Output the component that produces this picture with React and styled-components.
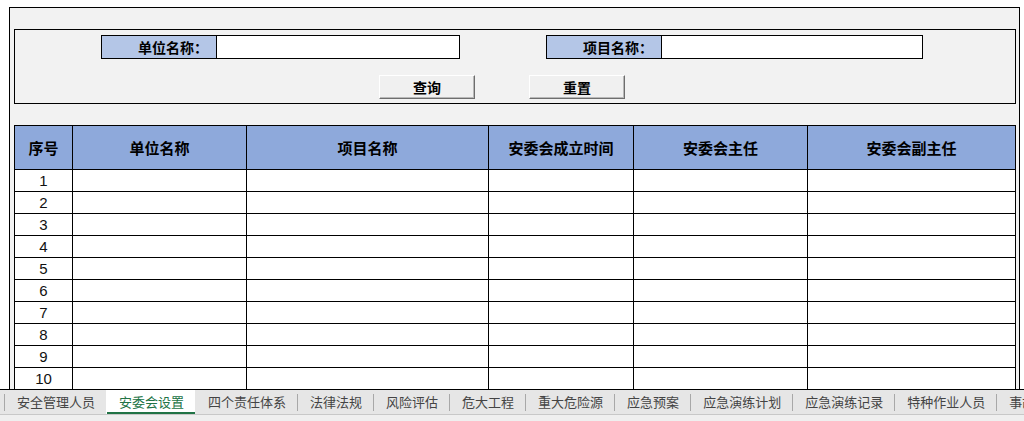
import React from "react";
import styled, { createGlobalStyle } from "styled-components";

const GlobalStyle = createGlobalStyle`
  html, body {
    margin: 0;
    padding: 0;
    background: #fff;
  }
  body {
    font-family: "Noto Sans CJK SC", "Liberation Sans", sans-serif;
  }
`;

const Page = styled.div`
  width: 1024px;
  height: 421px;
  display: flex;
  flex-direction: column;
  overflow: hidden;
`;

const Sheet = styled.div`
  flex: 1;
  overflow: hidden;
  padding: 7px 0 0 9px;
`;

const Frame = styled.div`
  width: 1011px;
  height: 382px;
  box-sizing: border-box;
  background: #f2f2f2;
  border: 1px solid #000;
  border-bottom: none;
  padding: 21px 0 0 4px;
  overflow: hidden;
`;

// search panel

const SearchPanel = styled.div`
  width: 1002px;
  height: 75px;
  box-sizing: border-box;
  border: 1px solid #000;
  padding-top: 5px;
`;

const FieldRow = styled.div`
  display: flex;
  height: 24px;
`;

const Field = styled.div`
  display: flex;
  margin-left: ${(p) => p.offset}px;
  height: 24px;
  border: 1px solid #000;
  box-sizing: border-box;
`;

const Label = styled.div`
  width: 115px;
  background: #b4c6e7;
  border-right: 1px solid #000;
  font-weight: 700;
  font-size: 14px;
  line-height: 22px;
  text-align: right;
  padding-right: 8px;
  box-sizing: border-box;
  color: #000;
`;

const Input = styled.input`
  width: ${(p) => p.w}px;
  border: none;
  background: #fff;
  padding: 0 4px;
  outline: none;
  box-sizing: border-box;
`;

const ButtonRow = styled.div`
  display: flex;
  margin-top: 16px;
`;

const Button = styled.button`
  margin-left: ${(p) => p.offset}px;
  width: 96px;
  height: 24px;
  background: #f0f0f0;
  border: 1px solid;
  border-color: #fff #6e6e6e #6e6e6e #fff;
  box-shadow: inset -1px -1px 0 #b8b8b8;
  font-family: "Noto Sans CJK SC", sans-serif;
  font-weight: 700;
  font-size: 14px;
  color: #000;
  padding: 0;
  line-height: 20px;
`;

// table

const Table = styled.table`
  margin-top: 21px;
  border-collapse: collapse;
  table-layout: fixed;
  width: 1001px;
  background: #fff;
`;

const Th = styled.th`
  height: 43px;
  padding: 0;
  background: #8ea9db;
  border: 1px solid #000;
  font-size: 15px;
  font-weight: 700;
  color: #000;
  text-align: center;
`;

const Td = styled.td`
  height: 21px;
  padding: 0;
  border: 1px solid #000;
  font-family: "Liberation Sans", Arial, sans-serif;
  font-size: 15px;
  color: #111;
  text-align: center;
  line-height: 21px;
`;

// sheet tabs

const TabBar = styled.div`
  height: 32px;
  flex-shrink: 0;
  background: #e6e6e6;
  border-top: 1px solid #000;
  box-sizing: border-box;
  overflow: hidden;
`;

const TabRow = styled.div`
  display: flex;
  height: 24px;
  padding-left: 4px;
  white-space: nowrap;
  border-bottom: 1px solid #c8c8c8;
`;

const Tab = styled.div`
  flex-shrink: 0;
  height: 24px;
  padding: 0 11px 0 12px;
  font-size: 13px;
  line-height: 24px;
  color: ${(p) => (p.active ? "#217346" : "#444")};
  background: ${(p) => (p.active ? "#fff" : "transparent")};
  box-shadow: ${(p) => (p.active ? "inset 0 -2px 0 #217346" : "none")};
  border-left: 1px solid transparent;
  border-image: ${(p) =>
    p.sep
      ? "linear-gradient(transparent 5px, #a8a8a8 5px, #a8a8a8 20px, transparent 20px) 1"
      : "none"};
`;

const BottomStrip = styled.div`
  height: 6px;
  background: #efefef;
`;

const columns = [
  { title: "序号", w: 58 },
  { title: "单位名称", w: 174 },
  { title: "项目名称", w: 242 },
  { title: "安委会成立时间", w: 145 },
  { title: "安委会主任", w: 174 },
  { title: "安委会副主任", w: 208 },
];

const tabs = [
  "安全管理人员",
  "安委会设置",
  "四个责任体系",
  "法律法规",
  "风险评估",
  "危大工程",
  "重大危险源",
  "应急预案",
  "应急演练计划",
  "应急演练记录",
  "特种作业人员",
  "事故报告",
];

const activeTab = 1;

export default function App() {
  const rows = Array.from({ length: 10 }, (_, i) => i + 1);
  return (
    <Page>
      <GlobalStyle />
      <Sheet>
        <Frame>
          <SearchPanel>
            <FieldRow>
              <Field offset={86}>
                <Label>单位名称：</Label>
                <Input w={242} />
              </Field>
              <Field offset={86}>
                <Label>项目名称：</Label>
                <Input w={260} />
              </Field>
            </FieldRow>
            <ButtonRow>
              <Button offset={364}>查询</Button>
              <Button offset={54}>重置</Button>
            </ButtonRow>
          </SearchPanel>
          <Table>
            <colgroup>
              {columns.map((c) => (
                <col key={c.title} style={{ width: c.w }} />
              ))}
            </colgroup>
            <thead>
              <tr>
                {columns.map((c) => (
                  <Th key={c.title}>{c.title}</Th>
                ))}
              </tr>
            </thead>
            <tbody>
              {rows.map((n) => (
                <tr key={n}>
                  <Td>{n}</Td>
                  <Td />
                  <Td />
                  <Td />
                  <Td />
                  <Td />
                </tr>
              ))}
            </tbody>
          </Table>
        </Frame>
      </Sheet>
      <TabBar>
        <TabRow>
          {tabs.map((t, i) => (
            <Tab
              key={t}
              active={i === activeTab}
              sep={i !== activeTab && i !== activeTab + 1}
            >
              {t}
            </Tab>
          ))}
        </TabRow>
        <BottomStrip />
      </TabBar>
    </Page>
  );
}
